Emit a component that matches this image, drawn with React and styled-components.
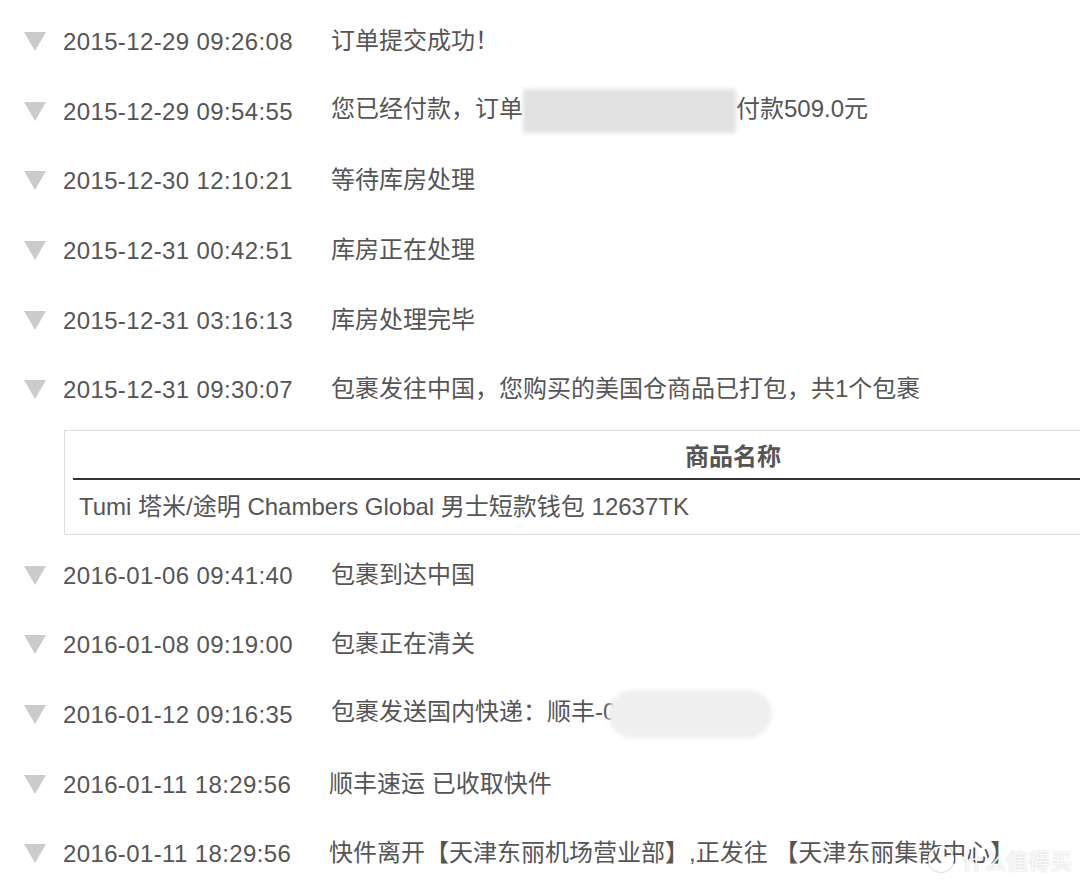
import React from 'react';
import styled, { createGlobalStyle } from 'styled-components';

const GlobalStyle = createGlobalStyle`
  html, body {
    margin: 0;
    padding: 0;
    background: #fff;
    overflow: hidden;
  }
  body {
    font-family: "Liberation Sans", "Noto Sans CJK SC", sans-serif;
    color: #555;
  }
`;

const Page = styled.div`
  position: relative;
  width: 1080px;
  height: 891px;
  overflow: hidden;
  padding-top: 6px;
  box-sizing: border-box;
`;

const Timeline = styled.ul`
  list-style: none;
  margin: 0;
  padding: 0;
`;

const Step = styled.li`
  display: grid;
  grid-template-columns: 22px 251px 1fr;
  column-gap: 17px;
  align-items: center;
  box-sizing: border-box;
  height: 69.6px;
  padding: 2px 0 0 24px;
  font-size: 24px;
  line-height: 30px;
  white-space: nowrap;
`;

const Arrow = styled.span`
  width: 0;
  height: 0;
  border-left: 11px solid transparent;
  border-right: 11px solid transparent;
  border-top: 19px solid #cbcbcb;
`;

const Time = styled.span`
  color: #555;
  letter-spacing: 0.37px;
  margin-top: 1px;
`;

const Text = styled.span`
  color: #555;
  margin-left: ${({ $shift }) => $shift || 0}px;
  margin-top: -1px;
`;

const Redacted = styled.span`
  display: inline-block;
  vertical-align: middle;
  width: ${({ $w }) => $w}px;
  height: ${({ $h }) => $h}px;
  margin-left: ${({ $ml }) => $ml || 0}px;
  background: ${({ $bg }) => $bg || '#e3e3e3'};
  border-radius: ${({ $round }) => ($round ? '24px' : '2px')};
  filter: blur(2px);
`;

const Detail = styled.li`
  margin: 6px 0 5px 64px;
  width: 1338px;
  border: 1px solid #dcdcdc;
  padding: 0 8px;
  box-sizing: border-box;
`;

const Goods = styled.table`
  width: 100%;
  border-collapse: collapse;
  font-size: 24px;
  color: #555;
`;

const HeadCell = styled.th`
  height: 47px;
  font-weight: bold;
  text-align: center;
  border-bottom: 2px solid #333;
  padding: 0;
`;

const Cell = styled.td`
  height: 50px;
  padding: 0 0 4px 6px;
  text-align: left;
`;

const Watermark = styled.div`
  position: absolute;
  right: 8px;
  bottom: 16px;
  display: flex;
  align-items: center;
  gap: 6px;
  font-size: 22px;
  color: rgba(255, 255, 255, 0.9);
  text-shadow: 0 0 2px rgba(0, 0, 0, 0.22);
`;

const steps = [
  ['2015-12-29 09:26:08', '订单提交成功！'],
  ['2015-12-29 09:54:55', 'paid'],
  ['2015-12-30 12:10:21', '等待库房处理'],
  ['2015-12-31 00:42:51', '库房正在处理'],
  ['2015-12-31 03:16:13', '库房处理完毕'],
  ['2015-12-31 09:30:07', '包裹发往中国，您购买的美国仓商品已打包，共1个包裹'],
];

const later = [
  ['2016-01-06 09:41:40', '包裹到达中国'],
  ['2016-01-08 09:19:00', '包裹正在清关'],
  ['2016-01-12 09:16:35', 'express'],
  ['2016-01-11 18:29:56', '顺丰速运 已收取快件', -2],
  ['2016-01-11 18:29:56', '快件离开【天津东丽机场营业部】,正发往 【天津东丽集散中心】', -2],
];

function renderText(text, shift) {
  if (text === 'paid') {
    return (
      <Text>
        您已经付款，订单
        <Redacted $w={213} $h={44} $bg="#e1e1e1" />
        付款509.0元
      </Text>
    );
  }
  if (text === 'express') {
    return (
      <Text>
        包裹发送国内快递：顺丰-0
        <Redacted $w={164} $h={48} $ml={-8} $bg="#efefef" $round />
      </Text>
    );
  }
  return <Text $shift={shift}>{text}</Text>;
}

function StepRow({ time, text, shift }) {
  return (
    <Step>
      <Arrow />
      <Time>{time}</Time>
      {renderText(text, shift)}
    </Step>
  );
}

export default function App() {
  return (
    <>
      <GlobalStyle />
      <Page>
        <Timeline>
          {steps.map(([time, text]) => (
            <StepRow key={time + text} time={time} text={text} />
          ))}
          <Detail>
            <Goods>
              <thead>
                <tr>
                  <HeadCell>商品名称</HeadCell>
                </tr>
              </thead>
              <tbody>
                <tr>
                  <Cell>Tumi 塔米/途明 Chambers Global 男士短款钱包 12637TK</Cell>
                </tr>
              </tbody>
            </Goods>
          </Detail>
          {later.map(([time, text, shift]) => (
            <StepRow key={time + text} time={time} text={text} shift={shift} />
          ))}
        </Timeline>
        <Watermark>
          <svg width="30" height="30" viewBox="0 0 30 30">
            <circle cx="15" cy="15" r="13" fill="none" stroke="rgba(0,0,0,0.12)" strokeWidth="2" />
            <circle cx="15" cy="15" r="12" fill="none" stroke="rgba(255,255,255,0.9)" strokeWidth="2" />
          </svg>
          什么值得买
        </Watermark>
      </Page>
    </>
  );
}
